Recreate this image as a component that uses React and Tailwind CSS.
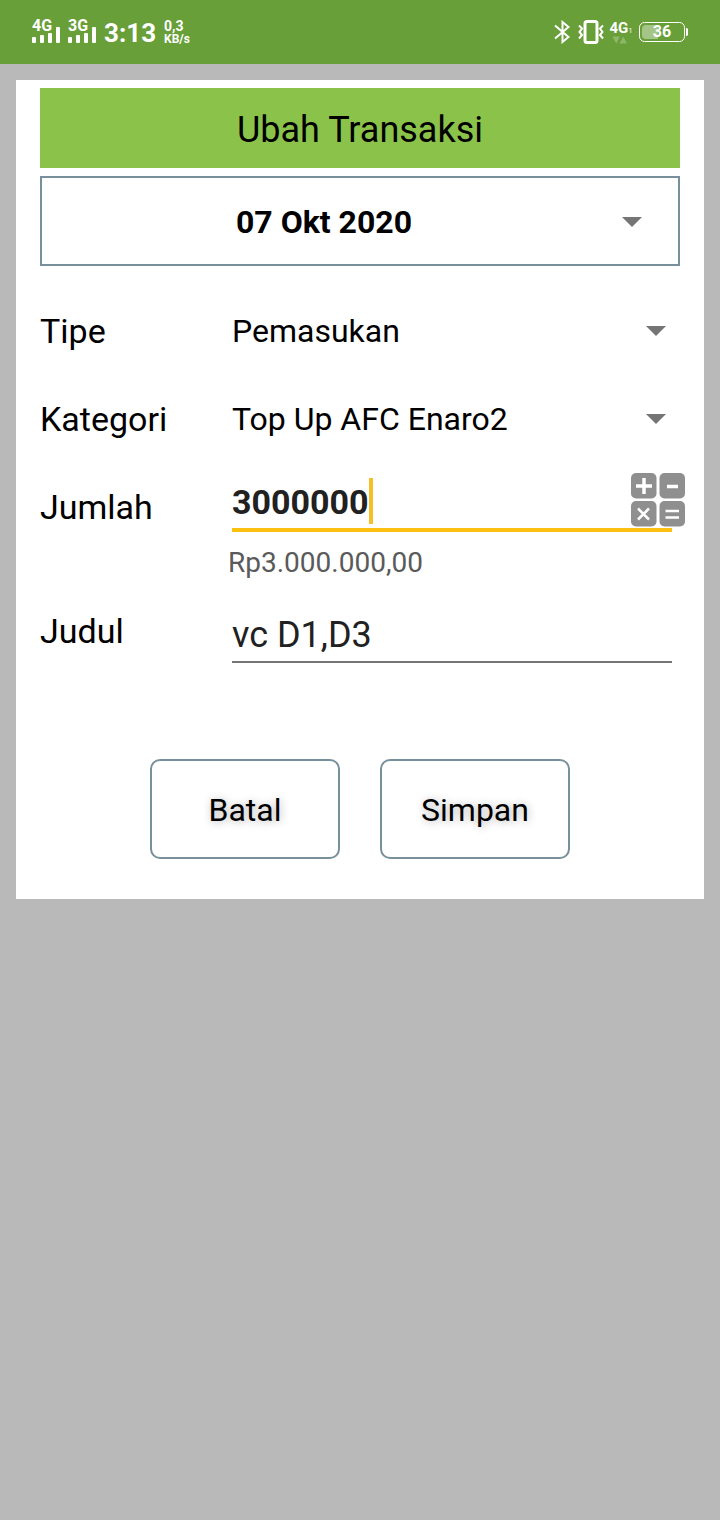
import React from "react";

function Signal({ label }) {
  return (
    <svg className="overflow-visible" width="28" height="28" viewBox="0 0 28 28" fill="#fff" role="img" aria-label={label + " signal"}>
      <text x="0" y="13" fontSize="16" fontWeight="700" fontFamily="Roboto, sans-serif">{label}</text>
      <rect x="0" y="19" width="4" height="6" rx="1" />
      <rect x="8" y="17" width="4" height="8" rx="1" />
      <rect x="16" y="15" width="4" height="10" rx="1" />
      <rect x="24" y="9" width="4" height="16" rx="1" />
    </svg>
  );
}

function StatusBar() {
  return (
    <header className="flex h-16 items-center justify-between bg-[#689f38] px-8 text-white">
      <div className="flex items-center gap-2">
        <Signal label="4G" />
        <Signal label="3G" />
        <span className="pt-[2px] text-[26px] leading-8 font-bold">3:13</span>
        <span className="flex flex-col font-bold">
          <span className="text-[14px] leading-[14px]">0,3</span>
          <span className="text-[12px] leading-3">KB/s</span>
        </span>
      </div>
      <div className="flex items-center">
        <svg width="16" height="24" viewBox="0 0 16 24" fill="none" stroke="#fff" strokeWidth="2" role="img" aria-label="Bluetooth">
          <path d="M1 5.500 14.500 17 8.500 22V2L14.500 7 1 18.500" />
        </svg>
        <svg className="ml-2" width="26" height="24" viewBox="0 0 26 24" fill="none" stroke="#fff" role="img" aria-label="Vibrate">
          <rect x="7" y="1.500" width="12" height="21" rx="2" strokeWidth="3" />
          <path d="M1 5.500 4 8.500 1.500 12 4 15 1 18.500M25 5.500 22 8.500 24.500 12 22 15 25 18.500" strokeWidth="2" />
        </svg>
        <svg className="ml-1 overflow-visible" width="27" height="26" viewBox="0 0 27 26" fill="#fff" role="img" aria-label="Mobile data">
          <text x="1.500" y="14" fontSize="15" fontWeight="700" fontFamily="Roboto, sans-serif">4G</text>
          <text x="20.500" y="14" fontSize="7" fontFamily="Roboto, sans-serif">1</text>
          <path d="M4.500 17.500H12L8.250 24.500zM11.500 24.500H19L15.250 17.500z" opacity=".25" />
        </svg>
        <svg className="ml-1" width="49" height="20" viewBox="0 0 49 20" role="img" aria-label="Battery">
          <rect x=".5" y=".5" width="45" height="19" rx="5" fill="none" stroke="#fff" />
          <path d="M7 3H19V17H7a4 4 0 0 1-4-4V7a4 4 0 0 1 4-4z" fill="#fff" opacity=".4" />
          <path d="M47 6a3 4 0 0 1 0 8z" fill="#fff" />
          <text x="23" y="15" textAnchor="middle" fontSize="16" fontWeight="700" fontFamily="Roboto, sans-serif" fill="#fff">36</text>
        </svg>
      </div>
    </header>
  );
}

function Arrow() {
  return (
    <svg className="pointer-events-none shrink-0" width="20" height="10" viewBox="0 0 20 10" fill="#757575" aria-hidden="true">
      <path d="M0 0H20L10 10z" />
    </svg>
  );
}

function SelectRow({ id, label, options }) {
  return (
    <div className="flex h-22 items-center">
      <label htmlFor={id} className="w-48 shrink-0 text-[34px] leading-10">{label}</label>
      <div className="grid flex-1 items-center pr-[14px]">
        <select id={id} className="col-start-1 row-start-1 h-16 w-full appearance-none bg-transparent pr-8 text-[32px] outline-none">
          {options.map((o) => <option key={o}>{o}</option>)}
        </select>
        <span className="pointer-events-none col-start-1 row-start-1 justify-self-end"><Arrow /></span>
      </div>
    </div>
  );
}

function CalculatorIcon() {
  return (
    <svg width="54" height="54" viewBox="0 0 54 54" aria-hidden="true">
      <g fill="#8f8f8f">
        <rect width="25.500" height="25.500" rx="5" />
        <rect x="28.500" width="25.500" height="25.500" rx="5" />
        <rect y="28" width="25.500" height="25.500" rx="5" />
        <rect x="28.500" y="28" width="25.500" height="25.500" rx="5" />
      </g>
      <g stroke="#fff" strokeWidth="3.500" fill="none">
        <path d="M5 13H21M13 5V21M36 13.500H47" />
        <path d="M7 35.500 18 46.500M18 35.500 7 46.500" strokeWidth="2.500" />
        <path d="M34.500 38H48M34.500 44.500H48" strokeWidth="2.500" />
      </g>
    </svg>
  );
}

const buttonClass =
  "h-[100px] w-[190px] rounded-[10px] border-2 border-[#78909c] bg-white pt-[2px] text-[32px] [text-shadow:1px_1px_8px_rgba(0,0,0,0.3)]";

export default function App() {
  return (
    <div className="min-h-screen bg-[#b9b9b9] font-[Roboto,sans-serif] text-black">
      <StatusBar />
      <main className="p-4">
        <form className="bg-white px-6 pt-2 pb-10" onSubmit={(e) => e.preventDefault()}>
          <h1 className="flex h-20 items-center justify-center bg-[#8bc34a] pt-1 text-4xl">Ubah Transaksi</h1>
          <button type="button" className="mt-2 flex h-[90px] w-full items-center gap-8 border-2 border-[#78909c] pt-[2px] pr-9 pl-4 text-[32px] font-bold">
            <span className="flex-1">07 Okt 2020</span>
            <Arrow />
          </button>

          <div className="mt-[21px]">
            <SelectRow id="tipe" label="Tipe" options={["Pemasukan"]} />
            <SelectRow id="kategori" label="Kategori" options={["Top Up AFC Enaro2"]} />
          </div>

          <div className="flex items-start">
            <label htmlFor="jumlah" className="flex h-22 w-48 shrink-0 items-center text-[34px] leading-10">Jumlah</label>
            <div className="flex-1 pt-[7px] pr-2">
              <div className="relative flex h-[62px] items-center border-b-4 border-[#fbc010] pt-1">
                <input id="jumlah" inputMode="numeric" defaultValue="3000000" className="field-sizing-content max-w-full bg-transparent pt-[2px] text-[34px] font-bold text-[#212121] caret-transparent outline-none" />
                <span className="h-[46px] w-1 bg-[#f4c025]" />
                <button type="button" aria-label="Kalkulator" className="absolute top-[3px] right-[-13px]">
                  <CalculatorIcon />
                </button>
              </div>
              <output htmlFor="jumlah" className="-ml-1 mt-[13px] block text-[28px] leading-9 text-[#5a5a5a]">Rp3.000.000,00</output>
            </div>
          </div>

          <div className="mt-[6px] flex items-start">
            <label htmlFor="judul" className="flex h-22 w-48 shrink-0 items-center text-[34px] leading-10">Judul</label>
            <div className="flex-1 pt-4 pr-2">
              <input id="judul" defaultValue="vc D1,D3" className="h-[60px] w-full border-b-2 border-[#757575] bg-transparent pt-[6px] text-4xl text-[#212121] outline-none" />
            </div>
          </div>

          <div className="mt-21 flex justify-center gap-10">
            <button type="button" className={buttonClass}>Batal</button>
            <button type="submit" className={buttonClass}>Simpan</button>
          </div>
        </form>
      </main>
    </div>
  );
}
